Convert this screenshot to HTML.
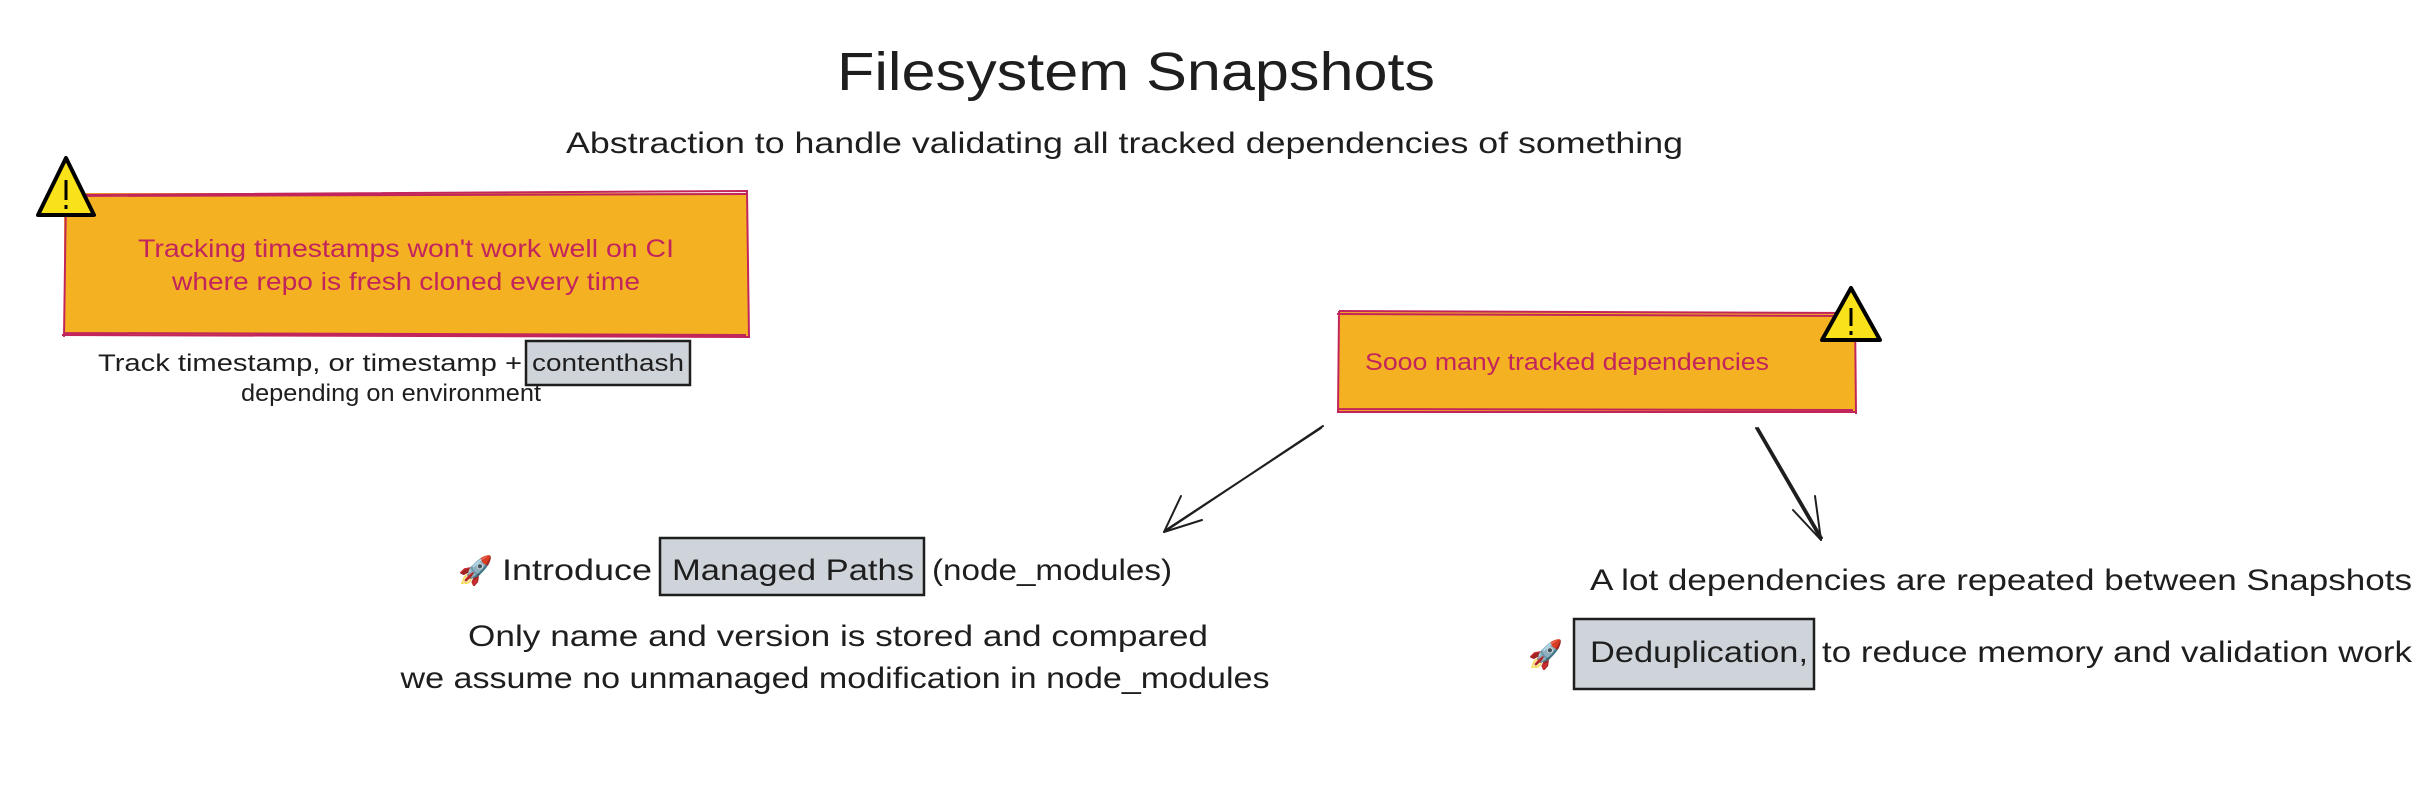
<!DOCTYPE html>
<html><head><meta charset="utf-8"><style>
html,body{margin:0;padding:0;background:#fff;width:2432px;height:809px;overflow:hidden}
svg{display:block}
text{font-family:"Liberation Sans",sans-serif}
</style></head><body>
<svg width="2432" height="809" viewBox="0 0 2432 809" xmlns="http://www.w3.org/2000/svg">
<g fill="#1e1e1e">
<text x="837" y="90" font-size="54" textLength="598" lengthAdjust="spacingAndGlyphs">Filesystem Snapshots</text>
<text x="566" y="153" font-size="30" textLength="1117" lengthAdjust="spacingAndGlyphs">Abstraction to handle validating all tracked dependencies of something</text>
</g>
<!-- left box -->
<rect x="64" y="193" width="684" height="143" fill="#f4b222"/>
<path d="M62 195 L748 191 M64 196 L746 194 M66 193 L64 337 M747 191 L749 338 M62 335 L748 337 M64 333 L746 335" stroke="#c2255c" stroke-width="2" fill="none"/>
<g fill="#c2255c" font-size="25" text-anchor="middle">
<text x="406" y="257" textLength="536" lengthAdjust="spacingAndGlyphs">Tracking timestamps won't work well on CI</text>
<text x="406" y="290" textLength="468" lengthAdjust="spacingAndGlyphs">where repo is fresh cloned every time</text>
</g>
<path d="M66 158 L94 215 L38 215 Z" fill="#fae21a" stroke="#000" stroke-width="4" stroke-linejoin="round"/>
<path d="M66 180 V200 M66 205 V209" stroke="#000" stroke-width="3"/>
<!-- contenthash -->
<rect x="526" y="341" width="164" height="44" fill="#ced4da" stroke="#1e1e1e" stroke-width="2.5"/>
<g fill="#1e1e1e" font-size="24">
<text x="98" y="371" textLength="424" lengthAdjust="spacingAndGlyphs">Track timestamp, or timestamp +</text>
<text x="532" y="371" textLength="152" lengthAdjust="spacingAndGlyphs">contenthash</text>
<text x="391" y="401" text-anchor="middle" textLength="300" lengthAdjust="spacingAndGlyphs">depending on environment</text>
</g>
<!-- right box -->
<rect x="1339" y="312" width="516" height="100" fill="#f4b222"/>
<path d="M1337 314 L1855 316 M1339 311 L1853 313 M1339 311 L1338 413 M1855 312 L1856 414 M1337 412 L1855 412 M1339 409 L1853 410" stroke="#c2255c" stroke-width="2" fill="none"/>
<text x="1567" y="370" font-size="24" fill="#c2255c" text-anchor="middle" textLength="404" lengthAdjust="spacingAndGlyphs">Sooo many tracked dependencies</text>
<path d="M1851 288 L1880 340 L1822 340 Z" fill="#fae21a" stroke="#000" stroke-width="4" stroke-linejoin="round"/>
<path d="M1851 308 V326 M1851 331 V335" stroke="#000" stroke-width="3"/>
<!-- arrows -->
<g stroke="#1e1e1e" stroke-width="2" fill="none" stroke-linecap="round">
<path d="M1323 426 L1164 532 M1321 428 L1166 530"/>
<path d="M1164 532 L1181 496 M1164 532 L1202 520"/>
<path d="M1756 428 L1821 540 M1758 428 L1822 538"/>
<path d="M1821 540 L1793 510 M1821 540 L1815 496"/>
</g>
<!-- managed paths -->
<rect x="660" y="538" width="264" height="57" fill="#ced4da" stroke="#1e1e1e" stroke-width="2.5"/>
<g fill="#1e1e1e" font-size="30">
<text x="458" y="580" font-size="28">🚀</text>
<text x="502" y="580" textLength="150" lengthAdjust="spacingAndGlyphs">Introduce</text>
<text x="672" y="580" textLength="242" lengthAdjust="spacingAndGlyphs">Managed Paths</text>
<text x="932" y="580" textLength="240" lengthAdjust="spacingAndGlyphs">(node_modules)</text>
<text x="838" y="646" text-anchor="middle" textLength="740" lengthAdjust="spacingAndGlyphs">Only name and version is stored and compared</text>
<text x="835" y="688" text-anchor="middle" textLength="869" lengthAdjust="spacingAndGlyphs">we assume no unmanaged modification in node_modules</text>
<text x="1590" y="590" textLength="822" lengthAdjust="spacingAndGlyphs">A lot dependencies are repeated between Snapshots</text>
</g>
<!-- dedup -->
<rect x="1574" y="619" width="240" height="70" fill="#ced4da" stroke="#1e1e1e" stroke-width="2.5"/>
<g fill="#1e1e1e" font-size="30">
<text x="1528" y="664" font-size="28">🚀</text>
<text x="1590" y="662" textLength="218" lengthAdjust="spacingAndGlyphs">Deduplication,</text>
<text x="1822" y="662" textLength="590" lengthAdjust="spacingAndGlyphs">to reduce memory and validation work</text>
</g>
</svg>
</body></html>
